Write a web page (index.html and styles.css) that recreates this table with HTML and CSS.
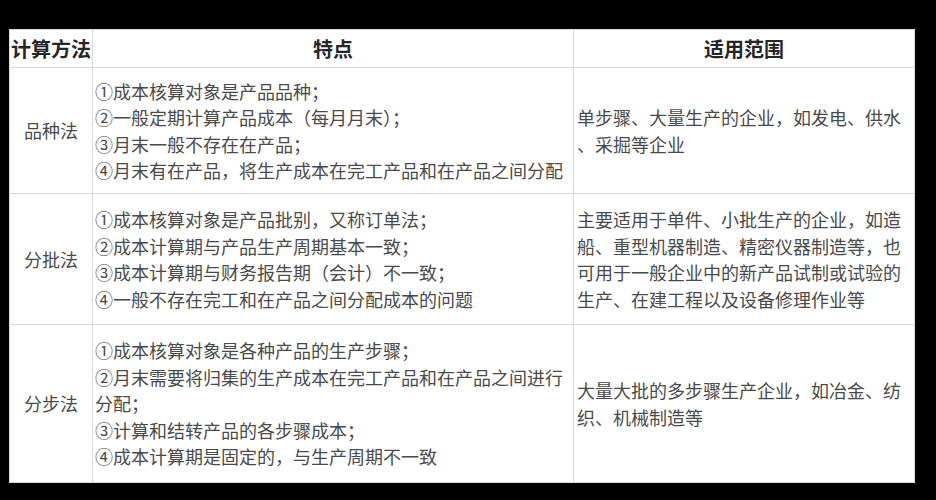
FILE: index.html
```html
<!DOCTYPE html>
<html lang="zh-CN">
<head>
<meta charset="utf-8">
<title>成本计算方法</title>
<link rel="stylesheet" href="styles.css">
</head>
<body>
<div class="sheet">
  <div class="cell head">计算方法</div>
  <div class="cell head">特点</div>
  <div class="cell head">适用范围</div>

  <div class="cell name">品种法</div>
  <div class="cell text">
    <div class="line">①成本核算对象是产品品种；</div>
    <div class="line">②一般定期计算产品成本（每月月末）；</div>
    <div class="line">③月末一般不存在在产品；</div>
    <div class="line">④月末有在产品，将生产成本在完工产品和在产品之间分配</div>
  </div>
  <div class="cell scope">
    <div class="line">单步骤、大量生产的企业，如发电、供水</div>
    <div class="line">、采掘等企业</div>
  </div>

  <div class="cell name">分批法</div>
  <div class="cell text">
    <div class="line">①成本核算对象是产品批别，又称订单法；</div>
    <div class="line">②成本计算期与产品生产周期基本一致；</div>
    <div class="line">③成本计算期与财务报告期（会计）不一致；</div>
    <div class="line">④一般不存在完工和在产品之间分配成本的问题</div>
  </div>
  <div class="cell scope">
    <div class="line">主要适用于单件、小批生产的企业，如造</div>
    <div class="line">船、重型机器制造、精密仪器制造等，也</div>
    <div class="line">可用于一般企业中的新产品试制或试验的</div>
    <div class="line">生产、在建工程以及设备修理作业等</div>
  </div>

  <div class="cell name">分步法</div>
  <div class="cell text">
    <div class="line">①成本核算对象是各种产品的生产步骤；</div>
    <div class="line">②月末需要将归集的生产成本在完工产品和在产品之间进行</div>
    <div class="line">分配；</div>
    <div class="line">③计算和结转产品的各步骤成本；</div>
    <div class="line">④成本计算期是固定的，与生产周期不一致</div>
  </div>
  <div class="cell scope">
    <div class="line">大量大批的多步骤生产企业，如冶金、纺</div>
    <div class="line">织、机械制造等</div>
  </div>
</div>
</body>
</html>
```

FILE: styles.css
```css
html, body {
  margin: 0;
  padding: 0;
  background: #000;
}

body {
  padding: 29px 0 0 9px;
  height: 500px;
  box-sizing: border-box;
  overflow: hidden;
  font-family: "Noto Sans CJK SC", "Noto Sans CJK TC", sans-serif;
}

.sheet {
  width: 906px;
  box-sizing: border-box;
  display: grid;
  grid-template-columns: 82px 480px 340px;
  grid-template-rows: 37px 125px 130px 157px;
  gap: 1px;
  border: 1px solid #dadada;
  background: #dadada;
}

.cell {
  background: #fff;
  display: flex;
  flex-direction: column;
  justify-content: center;
  color: #4a4a4a;
  font-size: 18px;
  line-height: 26.5px;
  white-space: nowrap;
}

.head {
  align-items: center;
  font-size: 20px;
  font-weight: 700;
  color: #262626;
  line-height: 24px;
}

.name {
  align-items: center;
}

.text {
  padding-left: 2px;
}

.scope {
  padding-left: 3px;
}
```
